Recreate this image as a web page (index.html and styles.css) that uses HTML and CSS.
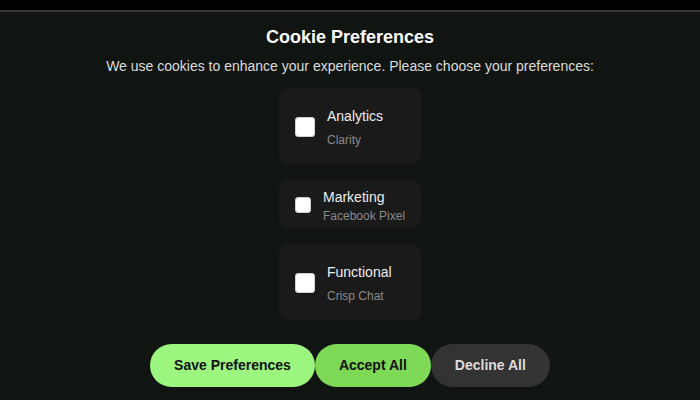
FILE: index.html
```html
<!DOCTYPE html>
<html lang="en">
<head>
    <meta charset="UTF-8">
    <meta name="viewport" content="width=device-width, initial-scale=1.0">
    <title>Cookie Preferences</title>
    <link rel="stylesheet" href="styles.css">
</head>
<body>

    <div class="cookie-banner">
        <h2 class="cookie-title">Cookie Preferences</h2>
        <p class="cookie-text">We use cookies to enhance your experience. Please choose your preferences:</p>

        <div class="cookie-options">
            <label class="cookie-option">
                <input type="checkbox" class="cookie-check" name="analytics">
                <div class="cookie-option-info">
                    <div class="cookie-option-name">Analytics</div>
                    <div class="cookie-option-desc">Clarity</div>
                </div>
            </label>
            <label class="cookie-option compact">
                <input type="checkbox" class="cookie-check" name="marketing">
                <div class="cookie-option-info">
                    <div class="cookie-option-name">Marketing</div>
                    <div class="cookie-option-desc">Facebook Pixel</div>
                </div>
            </label>
            <label class="cookie-option">
                <input type="checkbox" class="cookie-check" name="functional">
                <div class="cookie-option-info">
                    <div class="cookie-option-name">Functional</div>
                    <div class="cookie-option-desc">Crisp Chat</div>
                </div>
            </label>
        </div>

        <div class="cookie-actions">
            <button class="cookie-button save-button">Save Preferences</button>
            <button class="cookie-button accept-button">Accept All</button>
            <button class="cookie-button decline-button">Decline All</button>
        </div>
    </div>

</body>
</html>
```

FILE: styles.css
```css
body {
    margin: 0;
    padding-top: 10px;
    background-color: #000;
    font-family: 'Liberation Sans', Arial, sans-serif;
}

.cookie-banner {
    background-color: #111511;
    border-top: 2px solid #363636;
    padding: 15px 20px 24px;
    text-align: center;
}

.cookie-title {
    margin: 0;
    font-size: 18px;
    font-weight: 700;
    color: #fff;
}

.cookie-text {
    margin: 10px 0 14px;
    font-size: 14px;
    color: #dcdcdc;
}

.cookie-options {
    display: flex;
    flex-direction: column;
    align-items: center;
    gap: 16px;
}

.cookie-option {
    display: flex;
    align-items: center;
    gap: 12px;
    width: 142px;
    box-sizing: border-box;
    padding: 18px 16px 17px;
    background-color: #1a1a1a;
    border-radius: 8px;
    text-align: left;
    cursor: pointer;
}

.cookie-option.compact {
    padding: 7px 16px 5px;
}

.cookie-check {
    appearance: none;
    -webkit-appearance: none;
    flex-shrink: 0;
    width: 20px;
    height: 20px;
    margin: 0;
    background-color: #fff;
    border: 1px solid #d0d0d0;
    border-radius: 3px;
    box-sizing: border-box;
}

.compact .cookie-check {
    width: 16px;
    height: 16px;
}

.cookie-option-name {
    font-size: 14px;
    line-height: 20px;
    color: #eee;
}

.cookie-option-desc {
    margin-top: 7px;
    font-size: 12px;
    line-height: 14px;
    color: #8a8a8a;
    white-space: nowrap;
}

.compact .cookie-option-desc {
    margin-top: 2px;
}

.cookie-actions {
    display: flex;
    justify-content: center;
    margin-top: 24px;
}

.cookie-button {
    padding: 12px 24px;
    border: none;
    border-radius: 22px;
    font-family: inherit;
    font-size: 14px;
    font-weight: 700;
    line-height: 19px;
    cursor: pointer;
}

.save-button {
    background-color: #9cf57e;
    color: #111;
}

.accept-button {
    background-color: #7ed957;
    color: #111;
}

.decline-button {
    background-color: #333;
    color: #ddd;
}
```
